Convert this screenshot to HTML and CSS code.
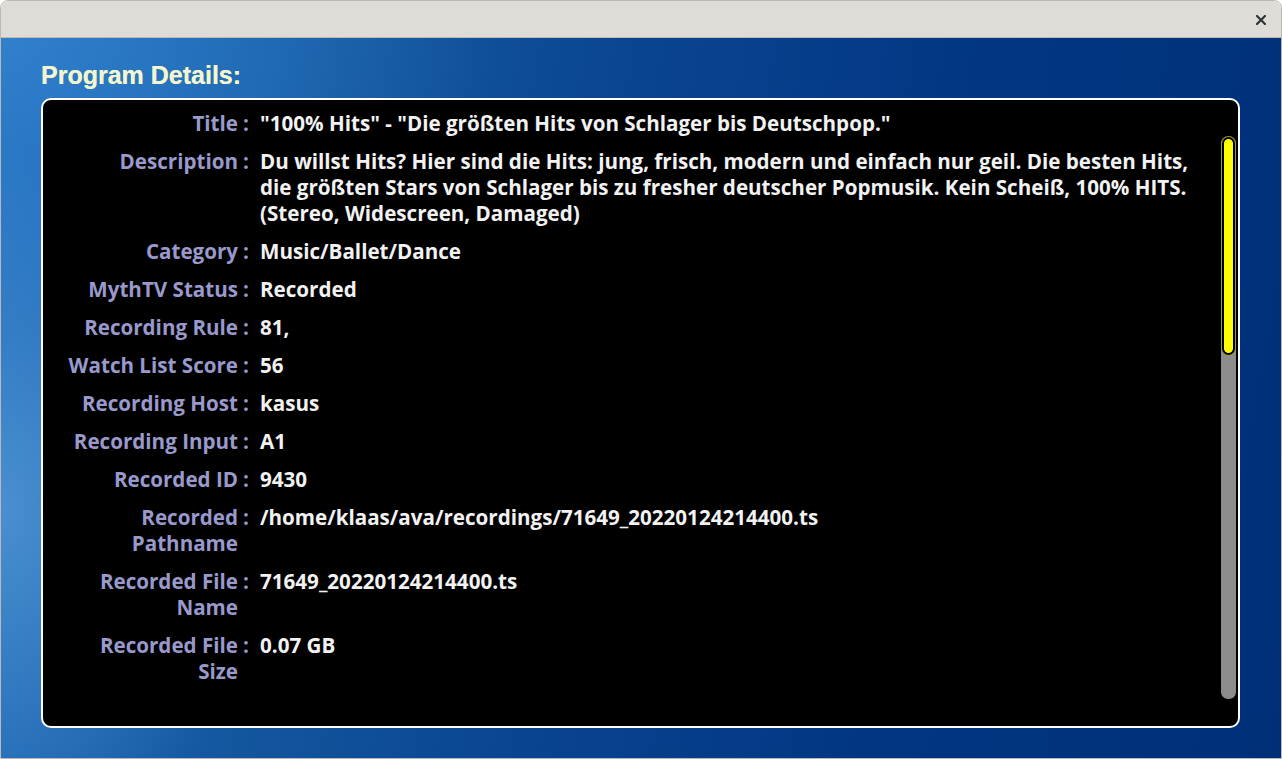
FILE: index.html
```html
<!DOCTYPE html>
<html>
<head>
<meta charset="utf-8">
<link rel="stylesheet" href="styles.css">
</head>
<body>
<div class="window">
  <div class="titlebar">
    <svg class="close" width="10" height="10" viewBox="0 0 10 10"><path d="M1 1 L9 9 M9 1 L1 9" stroke="#2e3436" stroke-width="2.2" stroke-linecap="square" fill="none"/></svg>
  </div>
  <div class="content">
    <h1 class="heading">Program Details:</h1>
    <div class="panel">
      <div class="list">
        <div class="row"><div class="label">Title</div><div class="colon">:</div><div class="value">"100% Hits" - "Die größten Hits von Schlager bis Deutschpop."</div></div>
        <div class="row"><div class="label">Description</div><div class="colon">:</div><div class="value">Du willst Hits? Hier sind die Hits: jung, frisch, modern und einfach nur geil. Die besten Hits, die größten Stars von Schlager bis zu fresher deutscher Popmusik. Kein Scheiß, 100% HITS. (Stereo, Widescreen, Damaged)</div></div>
        <div class="row"><div class="label">Category</div><div class="colon">:</div><div class="value">Music/Ballet/Dance</div></div>
        <div class="row"><div class="label">MythTV Status</div><div class="colon">:</div><div class="value">Recorded</div></div>
        <div class="row"><div class="label">Recording Rule</div><div class="colon">:</div><div class="value">81,</div></div>
        <div class="row"><div class="label">Watch List Score</div><div class="colon">:</div><div class="value">56</div></div>
        <div class="row"><div class="label">Recording Host</div><div class="colon">:</div><div class="value">kasus</div></div>
        <div class="row"><div class="label">Recording Input</div><div class="colon">:</div><div class="value">A1</div></div>
        <div class="row"><div class="label">Recorded ID</div><div class="colon">:</div><div class="value">9430</div></div>
        <div class="row"><div class="label">Recorded Pathname</div><div class="colon">:</div><div class="value">/home/klaas/ava/recordings/71649_20220124214400.ts</div></div>
        <div class="row"><div class="label">Recorded File Name</div><div class="colon">:</div><div class="value">71649_20220124214400.ts</div></div>
        <div class="row"><div class="label">Recorded File Size</div><div class="colon">:</div><div class="value">0.07 GB</div></div>
      </div>
      <div class="scrollbar"><div class="thumb"></div></div>
    </div>
  </div>
</div>
</body>
</html>
```

FILE: styles.css
```css
html, body {
  margin: 0;
  padding: 0;
  background: #ffffff;
}
body {
  width: 1282px;
  height: 759px;
  overflow: hidden;
}
.window {
  width: 1280px;
  height: 757px;
  border: 1px solid #bcb9b5;
  border-radius: 8px 8px 0 0;
  overflow: hidden;
  display: flex;
  flex-direction: column;
}
.titlebar {
  height: 36px;
  background: #dfdcd8;
  border-bottom: 1px solid #bdb9b5;
  display: flex;
  align-items: center;
  justify-content: flex-end;
  padding-right: 15px;
}
.close {
  display: block;
  margin-top: 1px;
}
.content {
  flex: 1;
  display: flex;
  flex-direction: column;
  padding: 24px 41px 30px 40px;
  background:
    radial-gradient(ellipse 260px 360px at 0px 470px, rgba(110,175,230,0.55), rgba(110,175,230,0) 100%),
    radial-gradient(ellipse 500px 300px at 0px 0px, rgba(60,140,215,0.6), rgba(60,140,215,0) 100%),
    linear-gradient(100deg, #1f6dbe 0%, #13579f 25%, #0a4591 45%, #023683 70%, #002f78 100%);
}
.heading {
  margin: 0 0 10px 0;
  font-family: "Liberation Sans", Arial, sans-serif;
  font-weight: bold;
  font-size: 25px;
  line-height: 26px;
  color: #f2f5d6;
  text-shadow: 0 0 0.5px #e6ee5a;
}
.panel {
  flex: 1;
  background: #000000;
  border: 2px solid #ffffff;
  border-radius: 10px;
  display: flex;
  min-height: 0;
}
.list {
  flex: 1;
  padding: 10px 0 0 15px;
  display: flex;
  flex-direction: column;
  gap: 12px;
  font-family: "Open Sans", "Noto Sans", sans-serif;
  font-weight: bold;
  font-size: 20.6px;
  line-height: 26px;
}
.row {
  display: flex;
  align-items: flex-start;
}
.label {
  width: 180px;
  flex: none;
  text-align: right;
  color: #9999cc;
}
.colon {
  width: 6px;
  flex: none;
  margin-left: 5px;
  color: #9999cc;
}
.value {
  margin-left: 11px;
  margin-right: 20px;
  color: #f2f2f2;
}
.scrollbar {
  width: 15px;
  flex: none;
  margin: 37px 2px 27px 0;
  background: #8c8c8c;
  border-radius: 7px;
  display: flex;
  flex-direction: column;
}
.thumb {
  height: 214px;
  margin: 0 1px;
  background: #ffff00;
  border: 2px solid #000000;
  box-shadow: 0 0 0 1px #9a9a3c;
  border-radius: 7px;
}
```
